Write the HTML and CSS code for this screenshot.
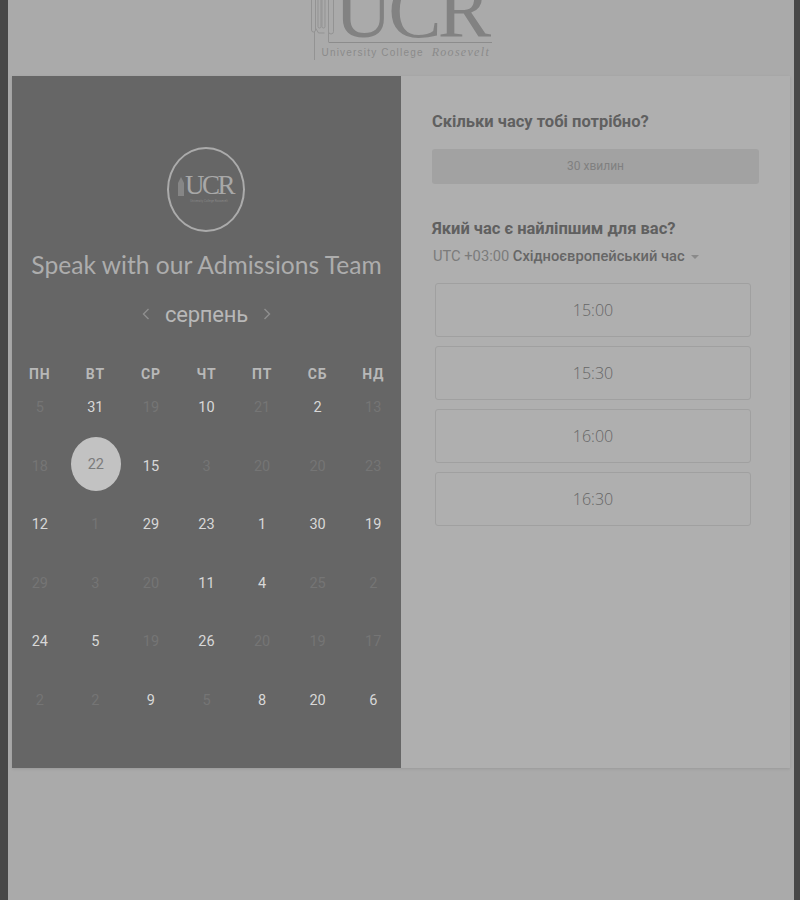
FILE: index.html
```html
<!DOCTYPE html>
<html lang="uk">
<head>
  <meta charset="UTF-8">
  <meta name="viewport" content="width=device-width, initial-scale=1.0">
  <title>Speak with our Admissions Team</title>
  <link rel="stylesheet" href="styles.css">
</head>
<body>

  <div class="page">
    <header class="top">
      <div class="brand">
        <svg class="brand-mark" width="26" height="62" viewBox="0 0 26 62" fill="none" stroke="#939393" stroke-width="1">
          <rect x="1.500" y="-4" width="4" height="36" rx="2"/>
          <rect x="8" y="-4" width="3" height="32" rx="1.500"/>
          <rect x="12" y="-4" width="3" height="32" rx="1.500"/>
          <rect x="18.500" y="-4" width="5" height="38" rx="2.500"/>
          <path d="M5.500 28l3 5h6M4.500 32v28M18.500 30v12.500"/>
        </svg>
        <div class="brand-head">
          <div class="brand-name">UCR</div>
        </div>
        <div class="brand-sub">University College <em>Roosevelt</em></div>
      </div>
    </header>

    <main class="card">
      <section class="side">
        <div class="badge">
          <svg class="badge-mark" width="8" height="20" viewBox="0 0 8 20" fill="#868686">
            <path d="M1 20V7l3-6 3 6v13z"/>
          </svg>
          <span class="badge-name">UCR</span>
          <span class="badge-sub">University College Roosevelt</span>
        </div>
        <h1>Speak with our Admissions Team</h1>

        <div class="month">
          <svg width="8" height="12" viewBox="0 0 8 12" fill="none" stroke="#8f8f8f" stroke-width="1.400"><path d="M6.500 1L1.500 6l5 5"/></svg>
          <span class="month-name">серпень</span>
          <svg width="8" height="12" viewBox="0 0 8 12" fill="none" stroke="#8f8f8f" stroke-width="1.400"><path d="M1.500 1l5 5-5 5"/></svg>
        </div>

        <div class="weekdays">
          <span>ПН</span><span>ВТ</span><span>СР</span><span>ЧТ</span><span>ПТ</span><span>СБ</span><span>НД</span>
        </div>

        <div class="days">
          <span class="day">5</span><span class="day on">31</span><span class="day">19</span><span class="day on">10</span><span class="day">21</span><span class="day on">2</span><span class="day">13</span>
          <span class="day">18</span><span class="day selected"><b>22</b></span><span class="day on">15</span><span class="day">3</span><span class="day">20</span><span class="day">20</span><span class="day">23</span>
          <span class="day on">12</span><span class="day">1</span><span class="day on">29</span><span class="day on">23</span><span class="day on">1</span><span class="day on">30</span><span class="day on">19</span>
          <span class="day">29</span><span class="day">3</span><span class="day">20</span><span class="day on">11</span><span class="day on">4</span><span class="day">25</span><span class="day">2</span>
          <span class="day on">24</span><span class="day on">5</span><span class="day">19</span><span class="day on">26</span><span class="day">20</span><span class="day">19</span><span class="day">17</span>
          <span class="day">2</span><span class="day">2</span><span class="day on">9</span><span class="day">5</span><span class="day on">8</span><span class="day on">20</span><span class="day on">6</span>
        </div>
      </section>

      <section class="main">
        <h2>Скільки часу тобі потрібно?</h2>
        <div class="duration">30 хвилин</div>

        <h2 class="second">Який час є найліпшим для вас?</h2>
        <div class="zone">UTC +03:00 <strong>Східноєвропейський час</strong><i class="caret"></i></div>

        <div class="slots">
          <div class="slot">15:00</div>
          <div class="slot">15:30</div>
          <div class="slot">16:00</div>
          <div class="slot">16:30</div>
        </div>
      </section>
    </main>
  </div>

</body>
</html>
```

FILE: styles.css
```css
* {
  margin: 0;
  padding: 0;
  box-sizing: border-box;
}

body {
  font-family: 'Roboto', 'Liberation Sans', sans-serif;
  background: #aaa;
  color: #555;
}

.page {
  height: 900px;
  overflow: hidden;
  border-left: 8px solid #484848;
  border-right: 6px solid #484848;
  padding: 0 4px;
}

.top {
  height: 76px;
  display: flex;
  justify-content: center;
}

.brand {
  position: relative;
  width: 181px;
  height: 62px;
}

.brand-mark {
  position: absolute;
  left: -1px;
  top: 0;
}

.brand-head {
  overflow: hidden;
  height: 43px;
  margin-left: 18px;
  border-bottom: 1px solid #8c8c8c;
}

.brand-name {
  font-family: 'Liberation Serif', serif;
  font-size: 80px;
  line-height: 43px;
  margin-top: -11px;
  margin-left: 6px;
  letter-spacing: -4px;
  white-space: nowrap;
  color: #828282;
}

.brand-sub {
  padding: 2px 0 0 11px;
  font-family: 'Liberation Sans', sans-serif;
  font-size: 10px;
  line-height: 14px;
  letter-spacing: 1.2px;
  white-space: nowrap;
  color: #8a8a8a;
}

.brand-sub em {
  font-family: 'Liberation Serif', serif;
  font-size: 12px;
  letter-spacing: 1.3px;
  margin-left: 4px;
}

.card {
  display: flex;
  height: 692px;
  background: #afafaf;
  box-shadow: 0 1px 3px rgba(0, 0, 0, 0.1);
}

.side {
  width: 389px;
  background: #666;
  padding-top: 71px;
}

.badge {
  position: relative;
  width: 78px;
  height: 85px;
  margin-left: 155px;
  border: 2.5px solid #ababab;
  border-radius: 50%;
  text-align: center;
}

.badge-mark {
  position: absolute;
  left: 8px;
  top: 27px;
}

.badge-name {
  display: block;
  font-family: 'Liberation Serif', serif;
  font-size: 27px;
  line-height: 27px;
  letter-spacing: -2.5px;
  margin: 23px 0 0 6px;
  color: #a8a8a8;
}

.badge-sub {
  display: block;
  font-size: 3px;
  line-height: 5px;
  margin-left: 6px;
  white-space: nowrap;
  color: #868686;
}

h1 {
  font-family: 'Lato', sans-serif;
  font-weight: 400;
  font-size: 24.6px;
  line-height: 34px;
  margin-top: 16px;
  text-align: center;
  white-space: nowrap;
  color: #adadad;
}

.month {
  display: flex;
  justify-content: center;
  align-items: center;
  gap: 15px;
  height: 30px;
  margin-top: 17px;
}

.month-name {
  font-size: 22px;
  letter-spacing: -0.2px;
  color: #b8b8b8;
}

.weekdays,
.days {
  display: grid;
  grid-template-columns: repeat(7, 1fr);
  text-align: center;
}

.weekdays {
  margin-top: 36px;
  height: 28px;
  font-size: 14px;
  font-weight: 700;
  line-height: 18px;
  letter-spacing: 0.8px;
  color: #b8b8b8;
}

.days {
  grid-auto-rows: 58.5px;
  margin-top: -14.5px;
}

.day {
  display: flex;
  align-items: center;
  justify-content: center;
  font-size: 14.5px;
  color: #757575;
}

.day.on {
  color: #d8d8d8;
}

.day.selected b {
  display: flex;
  align-items: center;
  justify-content: center;
  width: 50px;
  height: 54px;
  margin: -4px 0 0 1px;
  border-radius: 50%;
  background: #c2c2c2;
  font-weight: 400;
  color: #7c7c7c;
}

.main {
  flex: 1;
  padding: 36px 31px 0;
}

h2 {
  font-size: 16.5px;
  font-weight: 700;
  line-height: 20px;
  color: #606060;
}

h2.second {
  margin-top: 35px;
}

.duration {
  width: 327px;
  height: 35px;
  margin-top: 17px;
  background: #a2a2a2;
  border-radius: 3px;
  text-align: center;
  font-size: 12px;
  line-height: 34px;
  color: #808080;
}

.zone {
  margin-top: 7px;
  margin-left: 1px;
  font-size: 14.7px;
  line-height: 20px;
  color: #7b7b7b;
}

.zone strong {
  font-weight: 500;
  color: #666;
}

.caret {
  display: inline-block;
  margin-left: 6px;
  vertical-align: middle;
  border: 4px solid transparent;
  border-top-color: #8a8a8a;
  border-bottom: 0;
}

.slots {
  display: flex;
  flex-direction: column;
  gap: 9px;
  width: 316px;
  margin: 17px 0 0 3px;
}

.slot {
  height: 54px;
  border: 1px solid #a0a0a0;
  border-radius: 3px;
  text-align: center;
  font-family: 'Open Sans', sans-serif;
  font-weight: 300;
  font-size: 16px;
  line-height: 52px;
  color: #666;
}
```
